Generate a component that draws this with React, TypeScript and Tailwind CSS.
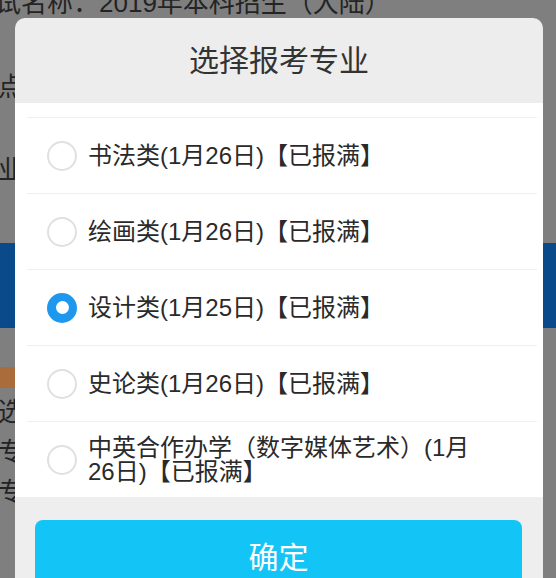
import React, { useState } from 'react';

interface Major {
  id: string;
  label: string;
}

const majors: Major[] = [
  { id: 'shufa', label: '书法类(1月26日)【已报满】' },
  { id: 'huihua', label: '绘画类(1月26日)【已报满】' },
  { id: 'sheji', label: '设计类(1月25日)【已报满】' },
  { id: 'shilun', label: '史论类(1月26日)【已报满】' },
  { id: 'zhongying', label: '中英合作办学（数字媒体艺术）(1月26日)【已报满】' },
];

const Radio: React.FC<{ checked: boolean }> = ({ checked }) =>
  checked ? (
    <span className="flex h-[30px] w-[30px] shrink-0 items-center justify-center rounded-full bg-[#1e98ee]">
      <span className="h-[13px] w-[13px] rounded-full bg-white" />
    </span>
  ) : (
    <span className="h-[30px] w-[30px] shrink-0 rounded-full border-2 border-[#e0e0e0] bg-white" />
  );

export default function App() {
  const [selected, setSelected] = useState('sheji');

  return (
    <div className="relative h-[578px] w-[556px] overflow-hidden bg-[#7f7f7f] font-['Liberation_Sans','Noto_Sans_CJK_SC',sans-serif]">
      {/* page under the mask */}
      <div className="flex flex-col text-[26px] leading-none text-[#242424]">
        <div className="-mt-[39px] flex h-[84px] items-center whitespace-nowrap">
          <span className="ml-[-31px]">考试名称：2019年本科招生（大陆）</span>
        </div>
        <div className="flex h-[83px] items-center">
          <span className="ml-[-28px]">考点</span>
        </div>
        <div className="flex h-[83px] items-center">
          <span className="ml-[-28px]">专业</span>
        </div>
        <div className="mt-[32px] h-[85px] bg-[#0b4a8a]" />
        <div className="mt-[39px] h-[21px] w-[140px] bg-[#a96c3a]" />
        <div className="mt-[4px] flex h-[40px] items-center">
          <span className="ml-[-2px]">选择专业</span>
        </div>
        <div className="flex h-[40px] items-center">
          <span className="ml-[-2px]">专业一</span>
        </div>
        <div className="flex h-[40px] items-center">
          <span className="ml-[-2px]">专业二</span>
        </div>
      </div>

      {/* dialog */}
      <div className="absolute left-[15px] top-[18px] flex w-[528px] flex-col overflow-hidden rounded-t-[10px]">
        <div className="flex h-[85px] items-center justify-center bg-[#ededed] text-[30px] text-[#333333]">
          选择报考专业
        </div>

        <div className="h-[394px] overflow-hidden bg-white pt-[14px]">
          <ul className="ml-3 mr-[6px]">
            {majors.map((m) => (
              <li
                key={m.id}
                onClick={() => setSelected(m.id)}
                className="flex h-[76px] cursor-pointer items-center border-t border-[#efefef] pl-5"
              >
                <Radio checked={selected === m.id} />
                <span className="ml-[11px] max-w-[395px] text-[24px] leading-[24px] text-[#2a2a2a]">
                  {m.label}
                </span>
              </li>
            ))}
          </ul>
        </div>

        <div className="bg-[#eeeeee] px-5 pt-[23px]">
          <button className="h-[74px] w-[487px] rounded-[8px] bg-[#13c5f6] text-[30px] text-white">
            确定
          </button>
        </div>
      </div>
    </div>
  );
}
